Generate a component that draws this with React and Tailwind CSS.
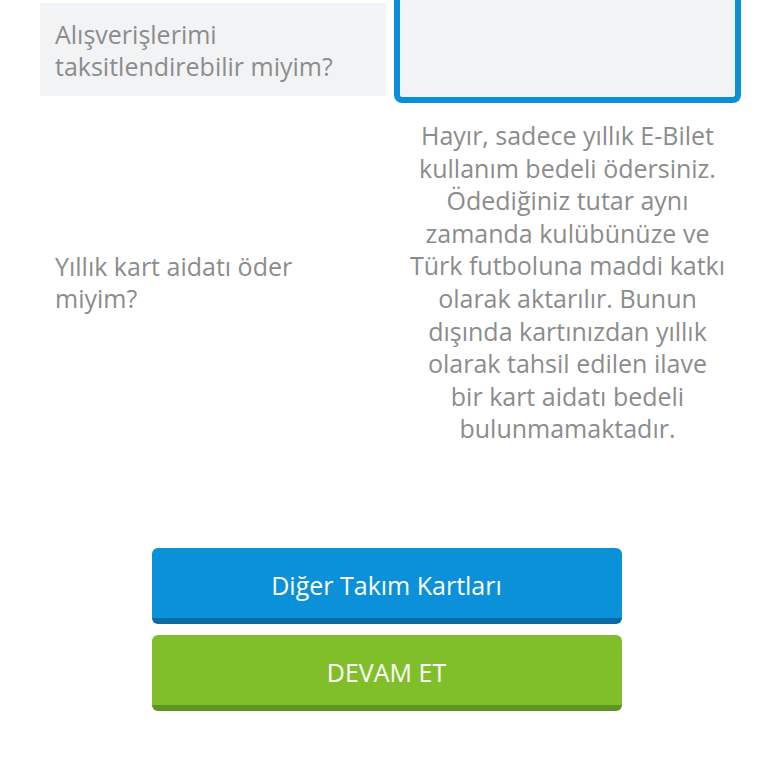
const answerLines = [
  'Hayır, sadece yıllık E-Bilet',
  'kullanım bedeli ödersiniz.',
  'Ödediğiniz tutar aynı',
  'zamanda kulübünüze ve',
  'Türk futboluna maddi katkı',
  'olarak aktarılır. Bunun',
  'dışında kartınızdan yıllık',
  'olarak tahsil edilen ilave',
  'bir kart aidatı bedeli',
  'bulunmamaktadır.',
]

export default function App() {
  const font = { fontFamily: '"Open Sans", "Noto Sans", sans-serif' }

  return (
    <div className="min-h-[768px] w-[768px] bg-white text-[#8c8c8c]" style={font}>
      <div className="flex pl-[40px]">
        <div className="mt-[3px] flex h-[93px] w-[346px] shrink-0 items-center bg-[#f2f3f5] pl-[15px] text-[25px] leading-[32px]">
          <p>
            Alışverişlerimi
            <br />
            taksitlendirebilir miyim?
          </p>
        </div>
        <div className="ml-[8px] h-[103px] w-[347px] shrink-0 rounded-b-[8px] border-[6px] border-t-0 border-[#0b8fd8] bg-[#f2f3f5]" />
      </div>

      <div className="flex pl-[40px] pt-[16px]">
        <div className="flex w-[346px] shrink-0 items-center pl-[15px] text-[25px] leading-[32px]">
          <p>
            Yıllık kart aidatı öder
            <br />
            miyim?
          </p>
        </div>
        <div className="ml-[8px] w-[347px] shrink-0 text-center text-[25px] leading-[32.6px]">
          {answerLines.map((line) => (
            <p key={line} className="whitespace-nowrap">{line}</p>
          ))}
        </div>
      </div>

      <div className="mt-[103px] flex flex-col items-center gap-[11px] pl-[5px]">
        <button className="flex h-[76px] w-[470px] items-center justify-center rounded-[6px] border-b-[6px] border-[#0a6aa3] bg-[#0b91d9] pt-[6px] text-[25px] text-white">
          Diğer Takım Kartları
        </button>
        <button className="flex h-[76px] w-[470px] items-center justify-center rounded-[6px] border-b-[6px] border-[#5c9521] bg-[#80bf29] pt-[6px] text-[25px] text-white">
          DEVAM ET
        </button>
      </div>
    </div>
  )
}
